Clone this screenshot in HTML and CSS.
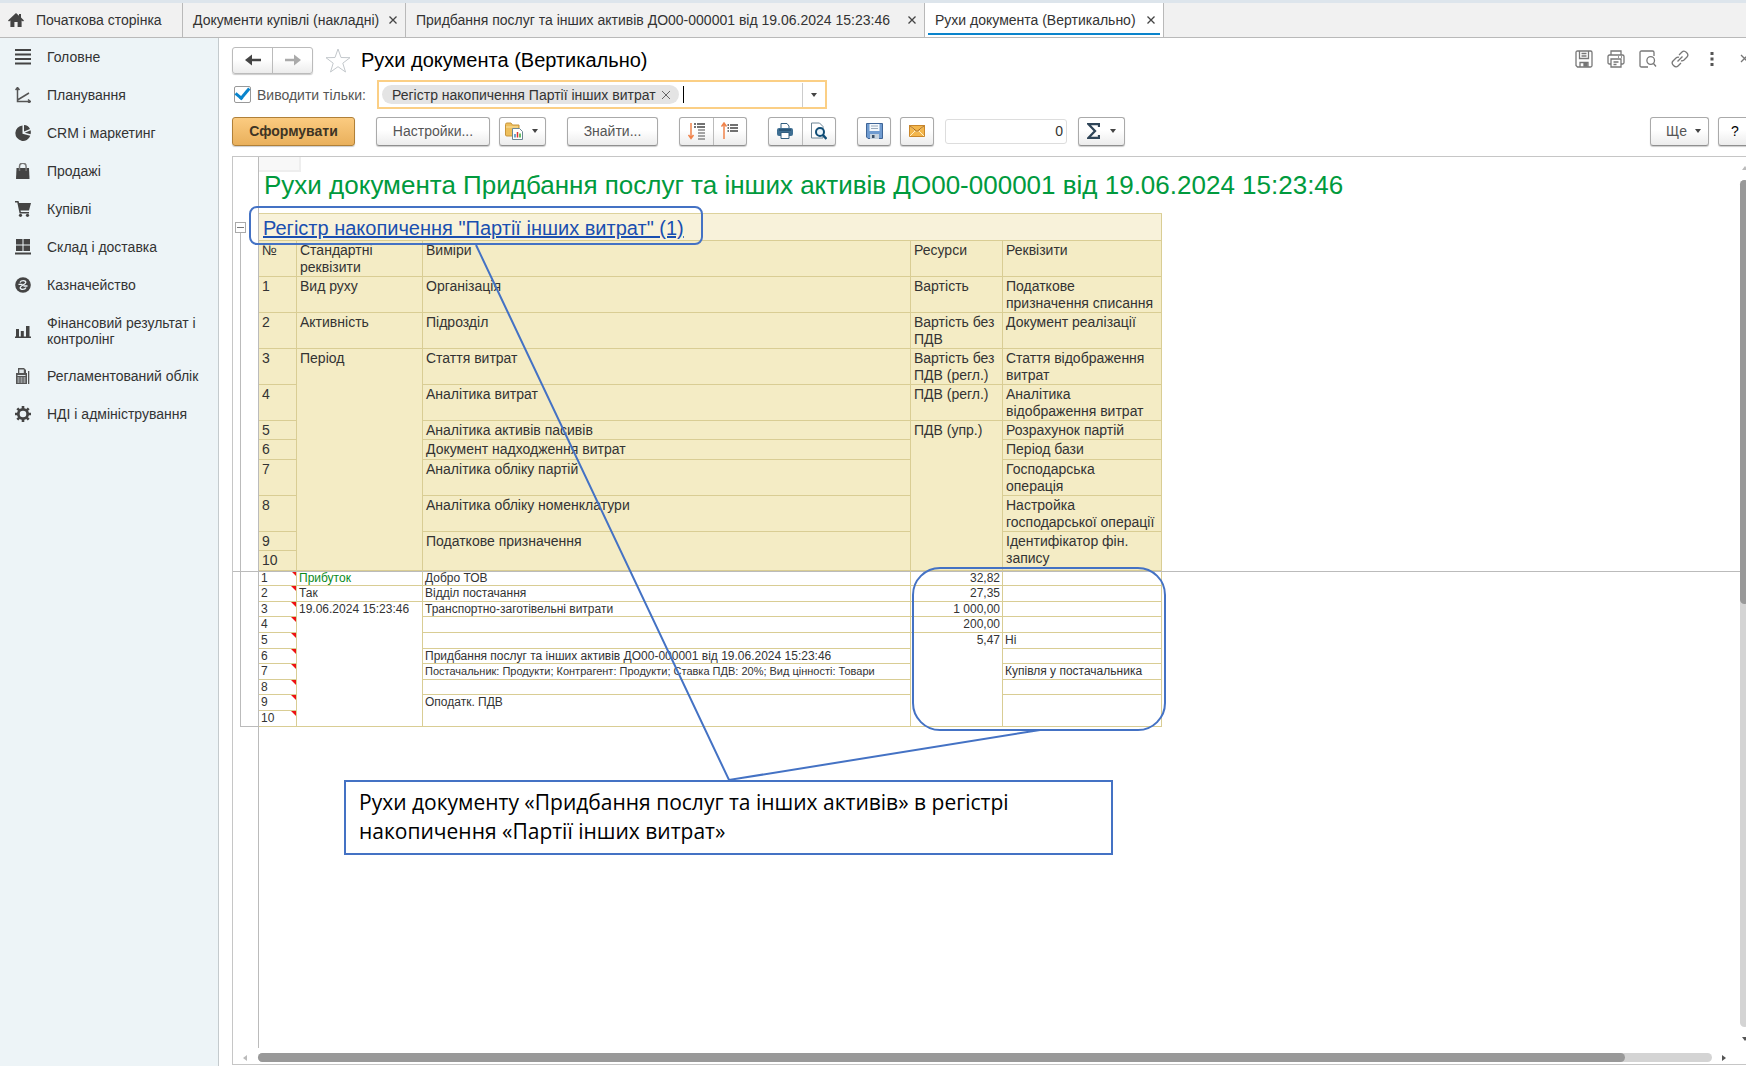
FILE: index.html
```html
<!DOCTYPE html>
<html lang="uk">
<head>
<meta charset="utf-8">
<title>Рухи документа (Вертикально)</title>
<link rel="stylesheet" href="styles.css">
</head>
<body>
<header class="tabs">
  <a class="tab tab-home" href="#"><svg width="16" height="14" viewBox="0 0 16 14"><path fill="#444" d="M8 0 0 7.4 1 8.500 2.400 7.400V14h4V9h3.200v5h4V7.400L15 8.500 16 7.400 13 4.600V1h-2v1.800z"/></svg>Початкова сторінка</a>
  <a class="tab tab-list" href="#">Документи купівлі (накладні)<svg class="x" viewBox="0 0 8 8"><path d="M.5.5l7 7M7.500.5l-7 7"/></svg></a>
  <a class="tab tab-doc" href="#">Придбання послуг та інших активів ДО00-000001 від 19.06.2024 15:23:46<svg class="x" viewBox="0 0 8 8"><path d="M.5.5l7 7M7.500.5l-7 7"/></svg></a>
  <a class="tab active" href="#">Рухи документа (Вертикально)<svg class="x" viewBox="0 0 8 8"><path d="M.5.5l7 7M7.500.5l-7 7"/></svg></a>
</header>
<div class="main">
<nav class="side">
  <a href="#"><svg viewBox="0 0 16 16"><path d="M0 1h16M0 5.500h16M0 10h16M0 14.500h16" stroke="#444" stroke-width="2"/></svg><span>Головне</span></a>
  <a href="#"><svg viewBox="0 0 16 16"><path d="M2.500 1v13.500H15M2.500 13 14 6M.5 3l2-2.500 2 2.500M13 12.500l2.500 2-2.500 2" fill="none" stroke="#555" stroke-width="1.500"/></svg><span>Планування</span></a>
  <a href="#"><svg viewBox="0 0 16 16"><path fill="#444" d="M7.500.5v8.300l7.800 2A7.700 7.700 0 1 1 7.500.5zM9 0a7 7 0 0 1 6 4L9 6.500zM15.600 5.300a8 8 0 0 1 0 4L9.800 7.800z"/></svg><span>CRM і маркетинг</span></a>
  <a href="#"><svg viewBox="0 0 16 16"><path fill="#444" d="M1.500 5H14l.5 11H1z"/><path d="M4.500 8V3.500a3.300 3.300 0 0 1 6.600 0V8" fill="none" stroke="#777" stroke-width="1.500"/></svg><span>Продажі</span></a>
  <a href="#"><svg viewBox="0 0 16 16"><path fill="#444" d="M0 0h3.500l.6 2H16l-2 7.500H5.500l.4 1.500H14v1.500H4.600L2.300 1.500H0z"/><circle cx="5.500" cy="14.300" r="1.600" fill="#444"/><circle cx="12.500" cy="14.300" r="1.600" fill="#444"/></svg><span>Купівлі</span></a>
  <a href="#"><svg viewBox="0 0 16 16"><path fill="#444" d="M1 0h6.500v5.500H1zM8.500 0H15v5.500H8.500zM1 6.500h6.500V12H1zM8.500 6.500H15V12H8.500zM0 13.500h16v2H0z"/></svg><span>Склад і доставка</span></a>
  <a href="#"><svg viewBox="0 0 16 16"><circle cx="8" cy="8" r="7.800" fill="#444"/><path d="M5 5.500C6 3 11 3 10.800 5.500 10.500 7.500 5.500 8.500 5.200 10.500 5 13 10 13 11 10.500M3.500 7.400h4M8.500 9h4" fill="none" stroke="#edf4f7" stroke-width="1.300"/></svg><span>Казначейство</span></a>
  <a class="two" href="#"><svg viewBox="0 0 16 16"><path fill="#444" d="M0 13.500h16V15H0zM1 6h3v8H1zM5.800 8h3v6h-3zM11 3h3.500v11H11z"/></svg><span>Фінансовий результат і контролінг</span></a>
  <a href="#"><svg viewBox="0 0 16 16"><path fill="#555" d="M3 0h6l2 2v3h1v11H1V5h2zM13 3h1.300v13H13z"/><path fill="#dfe6e9" d="M4.300 1.500h4.500v3.500H4.300zM2.500 7h8v1h-8zM2.500 9.500h2v1h-2zM5.500 9.500h2v1h-2zM8.500 9.500h2v1h-2zM2.500 11.500h2v1h-2zM5.500 11.500h2v1h-2zM8.500 11.500h2v1h-2zM2.500 13.500h2v1h-2zM5.500 13.500h2v1h-2zM8.500 13.500h2v1h-2z"/></svg><span>Регламентований облік</span></a>
  <a href="#"><svg viewBox="0 0 16 16"><circle cx="8" cy="8" r="4.700" fill="none" stroke="#444" stroke-width="2.800"/><path d="M8 0v3M8 13v3M0 8h3M13 8h3M2.300 2.300l2 2M11.700 11.700l2 2M13.700 2.300l-2 2M4.300 11.700l-2 2" stroke="#444" stroke-width="2.600"/></svg><span>НДІ і адміністрування</span></a>
</nav>
<main class="content">
  <div class="titlebar">
    <div class="group navs">
      <button aria-label="Назад"><svg width="16" height="12" viewBox="0 0 16 12"><path d="M16 6H4" stroke="#444" stroke-width="2.500"/><path fill="#444" d="M0 6 7 .5v11z"/></svg></button>
      <button aria-label="Вперед"><svg width="16" height="12" viewBox="0 0 16 12"><path d="M0 6h12" stroke="#aaa" stroke-width="2.500"/><path fill="#aaa" d="M16 6 9 .5v11z"/></svg></button>
    </div>
    <svg class="star" width="26" height="25" viewBox="0 0 26 25"><path d="M13 1l3 8.500 9 .2-7.200 5.500L20.500 24 13 18.700 5.500 24l2.700-8.800L1 9.700l9-.2z" fill="#fff" stroke="#c3c8cc"/></svg>
    <h1>Рухи документа (Вертикально)</h1>
    <div class="tools">
      <svg viewBox="0 0 18 18"><path d="M1 2.500Q1 1 2.500 1h13Q17 1 17 2.500v13q0 1.500-1.500 1.500h-13L1 15.500zM4.500 1v7.500h9V1M6.500 3.500h5M6.500 6h5M5 17v-4.500h8V17"/><path d="M9 13h3v3H9z" fill="#777"/></svg>
      <svg viewBox="0 0 18 18"><path d="M4 5V1h10v4M4 14H2.500Q1 14 1 12.500v-6Q1 5 2.500 5h13Q17 5 17 6.500v6q0 1.500-1.500 1.500H14M4 9h10v8H4zM6.500 12h5M6.500 14.500h3M11 7h1M14 7h1"/></svg>
      <svg viewBox="0 0 18 18"><path d="M9 17H2.500Q1 17 1 15.500v-13Q1 1 2.500 1h11Q15 1 15 2.500V6M14.500 13.500 17 16.500"/><circle cx="11.700" cy="10.500" r="3.800"/></svg>
      <svg viewBox="0 0 18 18"><path d="M8 5l3-3q2-2 4.500.5T16 7l-3 3q-1.500 1.300-3 .7M10 13l-3 3q-2 2-4.500-.5T2 11l3-3q1.500-1.300 3-.7M6.500 11.500l5-5"/></svg>
      <svg viewBox="0 0 18 18"><path fill="#555" stroke="none" d="M7.500 2h3v3h-3zM7.500 7.500h3v3h-3zM7.500 13h3v3h-3z"/></svg>
      <svg viewBox="0 0 18 18" class="close"><path d="M6 5l7 7M13 5l-7 7"/></svg>
    </div>
  </div>
  <div class="filter">
    <label><input type="checkbox" checked><span>Виводити тільки:</span></label>
    <div class="field">
      <span class="chip">Регістр накопичення Партії інших витрат<svg width="10" height="10" viewBox="0 0 10 10"><path d="M1 1l8 8M9 1L1 9" stroke="#666"/></svg></span>
      <input type="text" aria-label="Виводити тільки"><i class="caret"></i>
      <button class="drop" aria-label="Вибрати"><i class="tri"></i></button>
    </div>
  </div>
  <div class="toolbar">
    <button class="btn primary">Сформувати</button>
    <button class="btn settings">Настройки...</button>
    <button class="btn folder" aria-label="Варіанти"><svg width="19" height="18" viewBox="0 0 19 18"><path fill="#eebf5c" stroke="#c8963c" d="M.5 2.500Q.5 1 2 1h4l1.500 2H14v11H2Q.5 14 .5 13z"/><path d="M1 5h12" stroke="#fbe3a6"/><path fill="#fff" stroke="#6c8795" d="M7.500 6.500h7l3 3v8h-10z"/><path d="M10 15.500V12" stroke="#3b8ec0" stroke-width="1.500"/><path d="M12.500 15.500V10" stroke="#d33" stroke-width="1.500"/><path d="M15 15.500V11.500" stroke="#3a3" stroke-width="1.500"/></svg><i class="tri"></i></button>
    <button class="btn find">Знайти...</button>
    <div class="group tb g1">
      <button aria-label="Розгорнути групи"><svg width="17" height="18" viewBox="0 0 17 18"><path d="M3 1v15M.5 13 3 16.500 5.500 13" fill="none" stroke="#f0824a" stroke-width="1.500"/><path d="M6 2h2M9 2h8M6 5h2M9 5h8" stroke="#444" stroke-width="1.500"/><path d="M10 8h7M10 11h7M10 14h7M10 17h7" stroke="#888" stroke-width="1.500"/></svg></button>
      <button aria-label="Згорнути групи"><svg width="17" height="18" viewBox="0 0 17 18"><path d="M3 17V1M.5 4.500 3 1l2.500 3.500" fill="none" stroke="#f0824a" stroke-width="1.500"/><path d="M6.500 3H8M9 3h8M6.500 6H8M9 6h8M6.500 9H8M9 9h8" stroke="#444" stroke-width="1.500"/></svg></button>
    </div>
    <div class="group tb g2">
      <button aria-label="Друк"><svg width="16" height="16" viewBox="0 0 16 16"><path fill="#fff" stroke="#335f80" d="M4 5V.5h6L12 3v2"/><rect y="5" width="16" height="8" rx="2" fill="#3f6f93"/><path fill="#fff" stroke="#335f80" d="M4 9.500h8v6H4z"/><path d="M2 7h12" stroke="#173f5f"/></svg></button>
      <button aria-label="Попередній перегляд"><svg width="17" height="18" viewBox="0 0 17 18"><path fill="#fff" stroke="#6d8494" d="M1.500 1h8L13 4.500V16H1.500z"/><circle cx="10" cy="10" r="4" fill="#eaf4fa" stroke="#0f4c75" stroke-width="2"/><path d="M13 13l3.500 4" stroke="#0f4c75" stroke-width="2.500"/></svg></button>
    </div>
    <button class="btn sq save" aria-label="Зберегти"><svg width="17" height="16" viewBox="0 0 17 16"><path fill="#6f9bd0" stroke="#3f6597" d="M.5.5h16v15H2L.5 14z"/><path fill="#f4f8fc" d="M3.500 1h10v7h-10z"/><path d="M5 3h7M5 5.500h7" stroke="#9ab"/><path fill="#c5d2de" d="M4 11h9v5H4z"/><path fill="#3b5068" d="M6 12h2.500v3H6z"/></svg></button>
    <button class="btn sq mail" aria-label="Надіслати"><svg width="16" height="12" viewBox="0 0 16 12"><path fill="#f3b64c" stroke="#c9862a" d="M.5.500h15v11H.5z"/><path d="M1 1l7 6 7-6M1 11l5-5M15 11l-5-5" fill="none" stroke="#fff0c8"/><path d="M.5.5 8 6.500 15.500.5" fill="none" stroke="#a8691a"/></svg></button>
    <input class="num" type="text" value="0" aria-label="Сума">
    <button class="btn sigma" aria-label="Функція"><svg width="13" height="16" viewBox="0 0 13 16"><path d="M12 4V1.200H1.500L8 8l-6.500 6.800H12V12" fill="none" stroke="#2f4558" stroke-width="2.300"/></svg><i class="tri"></i></button>
    <button class="btn more">Ще<i class="tri"></i></button>
    <button class="btn help">?</button>
  </div>
  <section class="sheet">
    <div class="gutter"></div>
    <div class="page">
      <div class="cursor"></div>
      <h2>Рухи документа Придбання послуг та інших активів ДО00-000001 від 19.06.2024 15:23:46</h2>
      <table>
        <colgroup><col class="c1"><col class="c2"><col class="c3"><col class="c4"><col class="c5"></colgroup>
        <thead>
          <tr class="reg"><th colspan="5"><a href="#">Регістр накопичення "Партії інших витрат" (1)</a></th></tr>
          <tr><th>№</th><th>Стандартні реквізити</th><th>Виміри</th><th>Ресурси</th><th>Реквізити</th></tr>
          <tr><td>1</td><td>Вид руху</td><td>Організація</td><td>Вартість</td><td>Податкове призначення списання</td></tr>
          <tr><td>2</td><td>Активність</td><td>Підрозділ</td><td>Вартість без ПДВ</td><td>Документ реалізації</td></tr>
          <tr><td>3</td><td rowspan="8">Період</td><td>Стаття витрат</td><td>Вартість без ПДВ (регл.)</td><td>Стаття відображення витрат</td></tr>
          <tr><td>4</td><td>Аналітика витрат</td><td>ПДВ (регл.)</td><td>Аналітика відображення витрат</td></tr>
          <tr class="low"><td>5</td><td>Аналітика активів пасивів</td><td rowspan="6">ПДВ (упр.)</td><td>Розрахунок партій</td></tr>
          <tr class="mid"><td>6</td><td>Документ надходження витрат</td><td>Період бази</td></tr>
          <tr><td>7</td><td>Аналітика обліку партій</td><td>Господарська<br>операція</td></tr>
          <tr><td>8</td><td>Аналітика обліку номенклатури</td><td>Настройка господарської операції</td></tr>
          <tr class="low"><td>9</td><td rowspan="2">Податкове призначення</td><td rowspan="2">Ідентифікатор фін. запису</td></tr>
          <tr class="mid"><td>10</td></tr>
        </thead>
        <tbody>
          <tr><td class="n">1</td><td class="in">Прибуток</td><td>Добро ТОВ</td><td class="r">32,82</td><td></td></tr>
          <tr><td class="n">2</td><td>Так</td><td>Відділ постачання</td><td class="r">27,35</td><td></td></tr>
          <tr><td class="n">3</td><td rowspan="8">19.06.2024 15:23:46</td><td>Транспортно-заготівельні витрати</td><td class="r">1 000,00</td><td></td></tr>
          <tr><td class="n">4</td><td></td><td class="r">200,00</td><td></td></tr>
          <tr><td class="n">5</td><td></td><td class="r" rowspan="6">5,47</td><td>Ні</td></tr>
          <tr><td class="n">6</td><td>Придбання послуг та інших активів ДО00-000001 від 19.06.2024 15:23:46</td><td></td></tr>
          <tr><td class="n">7</td><td class="long">Постачальник: Продукти; Контрагент: Продукти; Ставка ПДВ: 20%; Вид цінності: Товари</td><td>Купівля у постачальника</td></tr>
          <tr><td class="n">8</td><td></td><td></td></tr>
          <tr><td class="n">9</td><td rowspan="2">Оподатк. ПДВ</td><td rowspan="2"></td></tr>
          <tr><td class="n">10</td></tr>
        </tbody>
      </table>
    </div>
    <div class="freeze"></div>
    <button class="fold" aria-label="Згорнути"></button>
    <div class="bracket"></div>
    <div class="mark mark-link"></div>
    <div class="mark mark-sums"></div>
    <svg class="lines" width="900" height="640" viewBox="0 0 900 640"><path d="M243 88 496 623 807 573" fill="none" stroke="#4472c4" stroke-width="2"/></svg>
    <p class="note">Рухи документу «Придбання послуг та інших активів» в регістрі<br>накопичення «Партії інших витрат»</p>
    <div class="hbar"><i class="left"></i><div class="track"><div class="thumb"></div></div><i class="right"></i></div>
    <div class="vbar"><i class="up"></i><div class="track"><div class="thumb"></div></div><i class="down"></i></div>
  </section>
</main>
</div>
</body>
</html>
```
FILE: styles.css
```css
* { box-sizing: border-box; }
body {
  margin: 0;
  height: 100vh;
  display: flex;
  flex-direction: column;
  overflow: hidden;
  font: 14px/16px "Liberation Sans", Arial, sans-serif;
  color: #333;
  background: #fff;
}
button, input { font: inherit; color: inherit; margin: 0; padding: 0; }
a { color: inherit; text-decoration: none; }
svg { flex: none; }

.tabs {
  display: flex;
  height: 38px;
  flex: none;
  border-top: 3px solid #dde5ec;
  border-bottom: 1px solid #b9b9b9;
  background: #f1f1f1;
}
.tab {
  display: flex;
  align-items: center;
  justify-content: space-between;
  gap: 9px;
  width: 239px;
  padding: 0 8px 0 10px;
  border-right: 1px solid #b9b9b9;
  white-space: nowrap;
}
.tab-home { width: 183px; padding: 0 8px; gap: 12px; justify-content: flex-start; }
.tab-list { width: 223px; }
.tab-doc { width: 519px; }
.tab .x { width: 8px; height: 8px; }
.x path { stroke: #444; stroke-width: 1.300; }
.tab.active {
  background: linear-gradient(#0a84cc, #0a84cc) center bottom 2px / calc(100% - 6px) 2px no-repeat #fff;
}

.main { flex: 1; display: flex; min-height: 0; }
.side {
  width: 219px;
  flex: none;
  border-right: 1px solid #c4cacd;
  background: #edf4f7;
}
.side a {
  display: flex;
  align-items: center;
  gap: 16px;
  height: 38px;
  padding: 0 8px 0 15px;
}
.side a.two { height: 53px; }
.side svg { width: 16px; height: 16px; }

.content {
  flex: 1;
  min-width: 0;
  display: flex;
  flex-direction: column;
  padding-left: 13px;
  margin-right: -8px;
}
.titlebar { display: flex; align-items: center; height: 43px; padding-top: 1px; }
.group, .btn {
  height: 29px;
  border: 1px solid #aaa;
  border-bottom-color: #8f8f8f;
  border-radius: 3px;
  background: linear-gradient(#fff 45%, #ececec);
  box-shadow: 0 1px 1px #ccc;
  flex: none;
}
.group { display: flex; }
.group button {
  flex: 1;
  display: flex;
  align-items: center;
  justify-content: center;
  border: 0;
  background: none;
}
.group button + button { border-left: 1px solid #bbb; }
.navs { width: 81px; height: 27px; border-color: #bbb; }
.star { margin: 0 10px 0 12px; }
h1 { margin: 0; font-size: 20px; line-height: 24px; font-weight: 400; color: #000; }
.tools { margin-left: auto; display: flex; gap: 14px; align-items: center; padding: 0 1px 2px 0; }
.tools svg { width: 18px; height: 18px; fill: none; stroke: #777; stroke-width: 1.300; }

.filter { display: flex; align-items: center; height: 27px; }
.filter label { display: flex; align-items: center; width: 145px; color: #555; }
.filter input[type=checkbox] {
  appearance: none;
  width: 17px;
  height: 17px;
  margin: 0 6px 0 2px;
  border: 1px solid #999;
  border-radius: 2px;
  background: #fff;
  display: grid;
  place-items: center;
}
.filter input[type=checkbox]:checked::after {
  content: "";
  width: 6px;
  height: 11px;
  border: solid #0a84cc;
  border-width: 0 3px 3px 0;
  transform: rotate(40deg);
  margin-top: -5px;
}
.field {
  display: flex;
  align-items: center;
  width: 450px;
  height: 29px;
  border: 2px solid #fbcf85;
  padding-left: 3px;
}
.chip {
  display: flex;
  align-items: center;
  gap: 5px;
  height: 19px;
  padding: 0 8px 0 10px;
  border-radius: 10px;
  background: #e4e4e4;
  white-space: nowrap;
}
.field input { flex: 1; min-width: 0; order: 1; border: 0; outline: 0; background: none; }
.caret { width: 1px; height: 17px; margin-left: 4px; background: #000; }
.drop { order: 2; width: 23px; height: 24px; border: 0; border-left: 1px solid #ccc; background: none; display: grid; place-items: center; }
.tri { width: 0; height: 0; border: 3px solid transparent; border-top: 4px solid #444; border-bottom: 0; }

.toolbar { display: flex; align-items: center; height: 48px; color: #555; padding-bottom: 2px; }
.btn { display: flex; align-items: center; justify-content: center; gap: 10px; }
.primary {
  width: 123px;
  margin-right: 21px;
  border-color: #b08038;
  background: linear-gradient(#fbcb80, #e9b05c);
  color: #3d3424;
  font-weight: 700;
}
.settings { width: 114px; margin-right: 9px; }
.folder { width: 47px; margin-right: 21px; gap: 8px; padding-right: 2px; }
.find { width: 91px; margin-right: 21px; }
.tb { width: 68px; margin-right: 21px; }
.sq { width: 34px; margin-right: 9px; }
.mail { margin-right: 11px; }
.num { width: 122px; height: 25px; border: 1px solid #ddd; border-radius: 3px; text-align: right; padding: 0 3px; margin-right: 11px; color: #333; }
.sigma { width: 47px; }
.more { width: 59px; margin-left: auto; margin-right: 9px; padding-left: 8px; gap: 8px; }
.help { width: 36px; color: #000; padding-right: 2px; }

.sheet {
  position: relative;
  flex: 1;
  display: flex;
  min-height: 0;
  margin-bottom: 1px;
  border: 1px solid #c6c6c6;
  overflow: hidden;
}
.gutter { width: 26px; flex: none; border-right: 1px solid #bbb; margin-bottom: 16px; }
.page { flex: 1; min-width: 0; }
.cursor { width: 42px; height: 15px; background: #f8f8f8; border: solid #eee; border-width: 0 2px 2px 0; }
h2 { margin: 0; height: 41px; padding-left: 5px; font-size: 26px; line-height: 26px; font-weight: 400; color: #009a3d; white-space: nowrap; }
table { width: 903px; table-layout: fixed; border-spacing: 0; border-top: 1px solid #ddd29c; }
.c1 { width: 38px; }
.c2 { width: 126px; }
.c3 { width: 488px; }
.c4 { width: 92px; }
.c5 { width: 159px; }
th, td { padding: 1px 0 0 3px; border: solid #d9cd94; border-width: 0 1px 1px 0; text-align: left; vertical-align: top; font-weight: 400; }
thead { background: #f4ecc5; line-height: 17px; }
thead tr { height: 36px; }
thead tr.low { height: 19px; }
thead tr.mid { height: 20px; }
thead tr.reg { height: 27px; background: #f8f2da; }
.reg th { padding: 2px 0 0 4px; font-size: 20px; line-height: 24px; }
.reg a { color: #1a4fb0; text-decoration: underline; }
tbody { font-size: 12px; line-height: 14px; }
tbody td { padding: 0 2px; white-space: nowrap; }
tbody tr { height: 16px; }
tbody tr:nth-child(5n+1), tbody tr:nth-child(5n+3) { height: 15px; }
.long { font-size: 11px; }
.n { background: linear-gradient(225deg, #e11 3px, transparent 4px); }
.in { color: #0a8a1c; }
.r { text-align: right; }

.freeze { position: absolute; left: 0; right: 0; top: 414px; height: 1px; background: #bbb; }
.fold { position: absolute; left: 2px; top: 65px; width: 11px; height: 11px; border: 1px solid #aaa; background: linear-gradient(#777, #777) center / 7px 1px no-repeat #fff; }
.bracket { position: absolute; left: 7px; top: 76px; width: 18px; height: 494px; border: solid #bbb; border-width: 0 0 1px 1px; }
.mark { position: absolute; border: 2px solid #4472c4; }
.mark-link { left: 16px; top: 49px; width: 454px; height: 39px; border-radius: 8px; }
.mark-sums { left: 679px; top: 410px; width: 254px; height: 164px; border-radius: 28px; }
.lines { position: absolute; left: 0; top: 0; }
.note {
  position: absolute;
  left: 111px;
  top: 623px;
  width: 769px;
  height: 75px;
  margin: 0;
  padding: 6px 13px;
  border: 2px solid #4472c4;
  background: #fff;
  color: #000;
  font: 21px/29px "Open Sans", "Noto Sans", sans-serif;
}
.hbar { position: absolute; left: 10px; right: 0; bottom: 2px; height: 9px; padding-right: 27px; display: flex; align-items: center; }
.hbar i, .vbar i { width: 0; height: 0; border: 3px solid transparent; }
.hbar .left { border-right: 4px solid #bbb; border-left: 0; }
.hbar .right { border-left: 4px solid #555; border-right: 0; }
.hbar .track { flex: 1; height: 9px; margin: 0 10px 0 11px; border-radius: 5px; background: #d4d4d4; }
.hbar .thumb { width: 94%; height: 9px; border-radius: 5px; background: #999; }
.vbar { position: absolute; right: 4px; top: 9px; bottom: 23px; width: 9px; display: flex; flex-direction: column; align-items: center; }
.vbar .up { border-bottom: 4px solid #bbb; border-top: 0; }
.vbar .down { border-top: 4px solid #555; border-bottom: 0; }
.vbar .track { flex: 1; width: 9px; margin: 10px 0; border-radius: 5px; background: #d4d4d4; }
.vbar .thumb { height: 50%; border-radius: 5px; background: #999; }
```
